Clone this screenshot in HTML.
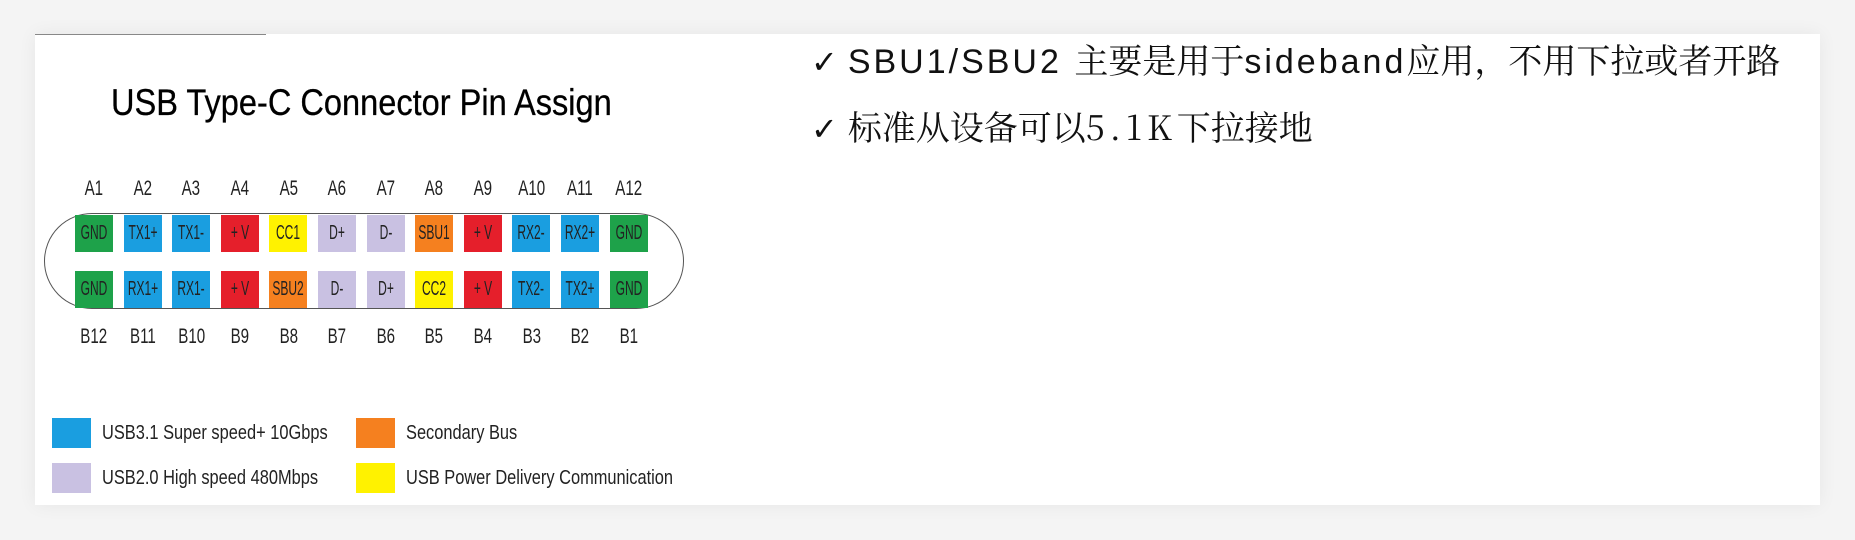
<!DOCTYPE html>
<html><head><meta charset="utf-8"><style>
html,body{margin:0;padding:0}
body{width:1855px;height:540px;background:#f4f4f4;position:relative;overflow:hidden;font-family:"Liberation Sans",sans-serif}
.card{position:absolute;left:35px;top:34px;width:1785px;height:471px;background:#fff;box-shadow:0 0 18px rgba(0,0,0,0.06)}
.ab{position:absolute;white-space:nowrap}
.cond{transform-origin:left center;display:inline-block}
.pin{position:absolute;width:38px;height:37px;font-size:20px;line-height:37px;color:#222;overflow:hidden}
.pin span{position:absolute;left:50%;top:0;white-space:nowrap;transform:translateX(-50%) scaleX(0.6)}
.lab{position:absolute;width:48px;text-align:center;font-size:21px;color:#222}
.lab span{display:inline-block;transform:scaleX(0.72)}
.sq{position:absolute;width:39px;height:30px}
.lg{position:absolute;font-size:20px;color:#222;line-height:30px;white-space:nowrap}
.lg span{display:inline-block;transform:scaleX(0.82);transform-origin:left center}
.rt{position:absolute;left:811px;font-family:"Liberation Sans","Noto Serif CJK SC",serif;font-size:34px;color:#111;white-space:nowrap;line-height:40px}
.lat{letter-spacing:3px;font-family:"Liberation Sans",sans-serif}
.ck{font-family:"DejaVu Sans",sans-serif;font-size:32px;margin-right:10px}
.cj{font-family:"Noto Serif CJK SC",serif;letter-spacing:5px}
</style></head><body>
<div class="card"></div>
<div class="ab" style="left:35px;top:34px;width:231px;height:1px;background:#888"></div>
<div class="ab" style="left:111px;top:83px;font-size:37px;color:#000;line-height:40px;-webkit-text-stroke:0.3px #000"><span class="cond" style="transform:scaleX(0.88)">USB Type-C Connector Pin Assign</span></div>
<div class="ab" style="left:44px;top:213px;width:640px;height:96px;border:1.5px solid #555;border-radius:48px;box-sizing:border-box"></div>
<div id="pins"></div>
<script>
var tt=["GND","TX1+","TX1-","+ V","CC1","D+","D-","SBU1","+ V","RX2-","RX2+","GND"];
var tc=["#1ea24a","#1a9ee0","#1a9ee0","#e51f2b","#fff200","#c9c1e2","#c9c1e2","#f5801f","#e51f2b","#1a9ee0","#1a9ee0","#1ea24a"];
var bt=["GND","RX1+","RX1-","+ V","SBU2","D-","D+","CC2","+ V","TX2-","TX2+","GND"];
var bc=["#1ea24a","#1a9ee0","#1a9ee0","#e51f2b","#f5801f","#c9c1e2","#c9c1e2","#fff200","#e51f2b","#1a9ee0","#1a9ee0","#1ea24a"];
var h="";
for(var i=0;i<12;i++){var x=75+i*48.6;
h+='<div class="pin" style="left:'+x+'px;top:215px;background:'+tc[i]+'"><span>'+tt[i]+'</span></div>';
h+='<div class="pin" style="left:'+x+'px;top:271px;background:'+bc[i]+'"><span>'+bt[i]+'</span></div>';
h+='<div class="lab" style="left:'+(x-5)+'px;top:177px"><span>A'+(i+1)+'</span></div>';
h+='<div class="lab" style="left:'+(x-5)+'px;top:325px"><span>B'+(12-i)+'</span></div>';}
document.getElementById("pins").innerHTML=h;
</script>
<div class="sq" style="left:52px;top:418px;background:#1a9ee0"></div>
<div class="sq" style="left:52px;top:463px;background:#c9c1e2"></div>
<div class="sq" style="left:356px;top:418px;background:#f5801f"></div>
<div class="sq" style="left:356px;top:463px;background:#fff200"></div>
<div class="lg" style="left:102px;top:418px"><span>USB3.1 Super speed+ 10Gbps</span></div>
<div class="lg" style="left:102px;top:463px"><span>USB2.0 High speed 480Mbps</span></div>
<div class="lg" style="left:406px;top:418px"><span>Secondary Bus</span></div>
<div class="lg" style="left:406px;top:463px"><span>USB Power Delivery Communication</span></div>
<div class="rt" style="top:42px"><span class="ck">✓</span><span class="lat">SBU1/SBU2 </span>主要是用于<span class="lat">sideband</span>应用，不用下拉或者开路</div>
<div class="rt" style="top:106px"><span class="ck">✓</span>标准从设备可以<span class="cj">5.1K</span>下拉接地</div>
</body></html>
